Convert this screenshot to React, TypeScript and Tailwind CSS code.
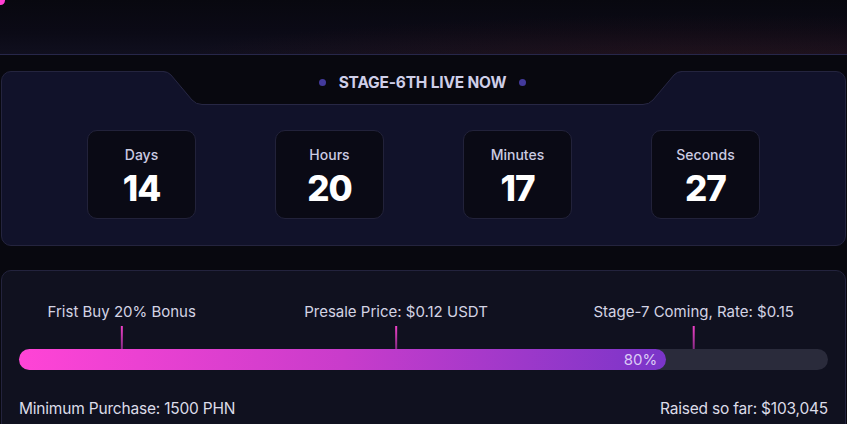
import type { ReactNode } from 'react';

const UNITS = [
  { label: 'Days', value: '14' },
  { label: 'Hours', value: '20' },
  { label: 'Minutes', value: '17' },
  { label: 'Seconds', value: '27' },
];

// Markers sit along the bar at a share of its width.
const MARKERS = [
  { text: 'Frist Buy 20% Bonus', at: 12.7 },
  { text: 'Presale Price: $0.12 USDT', at: 46.6 },
  { text: 'Stage-7 Coming, Rate: $0.15', at: 83.4 },
];

const PROGRESS = 80;

function StageTab({ children }: { children: ReactNode }) {
  const edge =
    'M0,0.5 Q5,0.5 8,4 L29,29 Q33,33.5 39,33.5 L480,33.5 Q486,33.5 490,29 L511,4 Q514,0.5 519,0.5';
  return (
    <div className="absolute -top-px left-[161px] h-[35px] w-[519px]">
      <svg width="519" height="35" viewBox="0 0 519 35" className="absolute inset-0" aria-hidden="true">
        <path d={`${edge} L519,0 L0,0 Z`} fill="#08080f" />
        <path d={edge} fill="none" stroke="#272744" strokeWidth="1" />
      </svg>
      <div className="relative flex h-[23px] items-center justify-center gap-[13px]">
        <span className="h-[7px] w-[7px] rounded-full bg-[#433a9c]" />
        <span className="text-[15.5px] font-bold tracking-[-0.2px] text-[#cfcfe8]">{children}</span>
        <span className="h-[7px] w-[7px] rounded-full bg-[#433a9c]" />
      </div>
    </div>
  );
}

function TimeBox({ label, value }: { label: string; value: string }) {
  return (
    <div className="flex h-[89px] w-[109px] flex-col items-center rounded-[10px] border border-[#22223a] bg-[#0a0a15] pt-[15px]">
      <span className="text-[14px] font-medium leading-[18px] text-[#cbcbe2]">{label}</span>
      <span className="mt-[5px] text-[35px] font-extrabold leading-[38px] tracking-[-1px] text-white">{value}</span>
    </div>
  );
}

export default function App() {
  return (
    <div className="h-[424px] w-[847px] overflow-hidden bg-[#08080f] font-['Inter',sans-serif]">
      <div className="relative h-[55px] border-b border-[#27274a] bg-[linear-gradient(180deg,#08080f_0%,#0b0a16_60%,#100f1e_100%)]">
        <div className="absolute inset-0 bg-[radial-gradient(ellipse_at_85%_120%,rgba(70,25,25,0.35),transparent_55%)]" />
        <div className="absolute -left-[4px] -top-[4px] h-[9px] w-[9px] rounded-full bg-[#ff3fd2]" />
      </div>

      <div className="flex flex-col gap-6 px-px pt-4">
        <section className="relative h-[175px] rounded-[10px] border border-[#24243e] bg-[#11122a] px-[85px] pt-[58px]">
          <StageTab>STAGE-6TH LIVE NOW</StageTab>
          <div className="flex justify-between">
            {UNITS.map((u) => (
              <TimeBox key={u.label} label={u.label} value={u.value} />
            ))}
          </div>
        </section>

        <section className="rounded-[10px] border border-[#23233d] bg-[#10111f] px-[17px]">
          <div className="relative h-[78px]">
            {MARKERS.map((m) => (
              <div
                key={m.text}
                className="absolute bottom-0 flex -translate-x-1/2 flex-col items-center"
                style={{ left: `${m.at}%` }}
              >
                <span className="whitespace-nowrap text-[15px] leading-[20px] text-[#d4d4e4]">{m.text}</span>
                <span className="mt-[4px] h-[23px] w-[2px] bg-[linear-gradient(180deg,#f040c8,#8a2a86)]" />
              </div>
            ))}
          </div>
          <div className="h-[21px] w-full rounded-full bg-[#2a2b3b]">
            <div
              className="flex h-full items-center justify-end rounded-full bg-[linear-gradient(90deg,#ff44d6_0%,#c93ccb_50%,#7a35c9_100%)] pr-[9px]"
              style={{ width: `${PROGRESS}%` }}
            >
              <span className="text-[15px] leading-none text-[#dccbf6]">{PROGRESS}%</span>
            </div>
          </div>
          <div className="mt-[27px] flex justify-between pb-6 text-[15.5px] leading-[24px] tracking-[-0.2px] text-[#dcdce8]">
            <span>Minimum Purchase: 1500 PHN</span>
            <span>Raised so far: $103,045</span>
          </div>
        </section>
      </div>
    </div>
  );
}
